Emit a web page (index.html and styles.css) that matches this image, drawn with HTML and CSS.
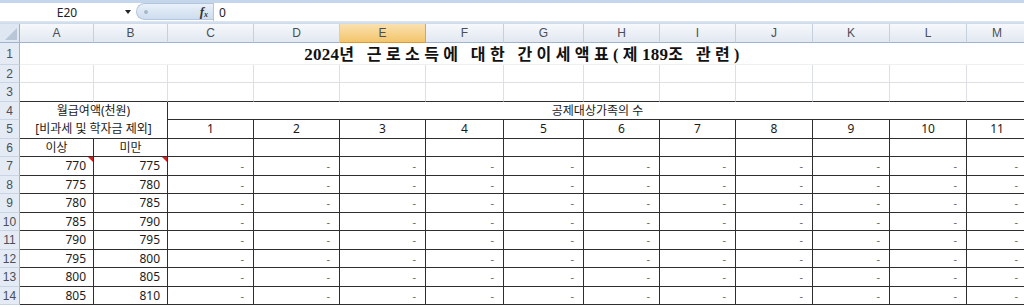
FILE: index.html
```html
<!DOCTYPE html>
<html lang="ko">
<head>
<meta charset="utf-8">
<title>간이세액표</title>
<link rel="stylesheet" href="styles.css">
</head>
<body>
<div class="app">
  <div class="fbar">
    <div class="namebox">E20</div>
    <div class="nb-arrow"></div>
    <div class="pill">
      <span class="pill-dot"></span>
      <span class="fx">f<sub>x</sub></span>
    </div>
    <div class="finput">0</div>
  </div>
  <div class="band"></div>
  <table class="grid">
    <colgroup>
      <col class="w-rh"><col class="w-a"><col class="w-a"><col class="w-c"><col class="w-c"><col class="w-c"><col class="w-f"><col class="w-g"><col class="w-h"><col class="w-h"><col class="w-j"><col class="w-j"><col class="w-j"><col class="w-m">
    </colgroup>
    <thead>
      <tr class="r-hdr">
        <th class="corner"><span class="tri"></span></th>
        <th>A</th><th>B</th><th>C</th><th>D</th><th class="sel">E</th><th>F</th><th>G</th><th>H</th><th>I</th><th>J</th><th>K</th><th>L</th><th>M</th>
      </tr>
    </thead>
    <tbody>
      <tr class="r1"><th>1</th><td colspan="13" class="title"><span class="dg">2024</span>년 근로소득에 대한 간이세액표(제<span class="dg">189</span>조 관련)</td></tr>
      <tr class="h18"><th>2</th><td></td><td></td><td></td><td></td><td></td><td></td><td></td><td></td><td></td><td></td><td></td><td></td><td></td></tr>
      <tr class="h19 pre"><th>3</th><td></td><td></td><td></td><td></td><td></td><td></td><td></td><td></td><td></td><td></td><td></td><td></td><td></td></tr>
      <tr class="h18 box"><th>4</th><td colspan="2" rowspan="2" class="lbl">월급여액(천원)<br>[비과세 및 학자금 제외]</td><td colspan="11" class="ctr">공제대상가족의 수</td></tr>
      <tr class="h19 box"><th>5</th><td class="ctr">1</td><td class="ctr">2</td><td class="ctr">3</td><td class="ctr">4</td><td class="ctr">5</td><td class="ctr">6</td><td class="ctr">7</td><td class="ctr">8</td><td class="ctr">9</td><td class="ctr">10</td><td class="ctr">11</td></tr>
      <tr class="h18 box"><th>6</th><td class="ctr">이상</td><td class="ctr">미만</td><td></td><td></td><td></td><td></td><td></td><td></td><td></td><td></td><td></td><td></td><td></td></tr>
      <tr class="h19 box"><th>7</th><td class="num cm">770<span class="note"></span></td><td class="num cm">775<span class="note"></span></td><td class="d">-</td><td class="d">-</td><td class="d">-</td><td class="d">-</td><td class="d">-</td><td class="d">-</td><td class="d">-</td><td class="d">-</td><td class="d">-</td><td class="d">-</td><td class="d">-</td></tr>
      <tr class="h18 box"><th>8</th><td class="num">775</td><td class="num">780</td><td class="d">-</td><td class="d">-</td><td class="d">-</td><td class="d">-</td><td class="d">-</td><td class="d">-</td><td class="d">-</td><td class="d">-</td><td class="d">-</td><td class="d">-</td><td class="d">-</td></tr>
      <tr class="h19 box"><th>9</th><td class="num">780</td><td class="num">785</td><td class="d">-</td><td class="d">-</td><td class="d">-</td><td class="d">-</td><td class="d">-</td><td class="d">-</td><td class="d">-</td><td class="d">-</td><td class="d">-</td><td class="d">-</td><td class="d">-</td></tr>
      <tr class="h18 box"><th>10</th><td class="num">785</td><td class="num">790</td><td class="d">-</td><td class="d">-</td><td class="d">-</td><td class="d">-</td><td class="d">-</td><td class="d">-</td><td class="d">-</td><td class="d">-</td><td class="d">-</td><td class="d">-</td><td class="d">-</td></tr>
      <tr class="h19 box"><th>11</th><td class="num">790</td><td class="num">795</td><td class="d">-</td><td class="d">-</td><td class="d">-</td><td class="d">-</td><td class="d">-</td><td class="d">-</td><td class="d">-</td><td class="d">-</td><td class="d">-</td><td class="d">-</td><td class="d">-</td></tr>
      <tr class="h18 box"><th>12</th><td class="num">795</td><td class="num">800</td><td class="d">-</td><td class="d">-</td><td class="d">-</td><td class="d">-</td><td class="d">-</td><td class="d">-</td><td class="d">-</td><td class="d">-</td><td class="d">-</td><td class="d">-</td><td class="d">-</td></tr>
      <tr class="h19 box"><th>13</th><td class="num">800</td><td class="num">805</td><td class="d">-</td><td class="d">-</td><td class="d">-</td><td class="d">-</td><td class="d">-</td><td class="d">-</td><td class="d">-</td><td class="d">-</td><td class="d">-</td><td class="d">-</td><td class="d">-</td></tr>
      <tr class="h18 box"><th>14</th><td class="num">805</td><td class="num">810</td><td class="d">-</td><td class="d">-</td><td class="d">-</td><td class="d">-</td><td class="d">-</td><td class="d">-</td><td class="d">-</td><td class="d">-</td><td class="d">-</td><td class="d">-</td><td class="d">-</td></tr>
    </tbody>
  </table>
</div>
</body>
</html>
```

FILE: styles.css
```css
* { box-sizing: border-box; }
html, body { margin: 0; padding: 0; background: #ffffff; }
body { width: 1024px; height: 307px; overflow: hidden; font-family: "Noto Sans", "Noto Sans CJK KR", sans-serif; }
.app { width: 1024px; overflow: hidden; }

.fbar {
  height: 21px;
  display: flex;
  align-items: stretch;
  border-top: 3px solid #c4d6ec;
  background: #ffffff;
  font-size: 12px;
  color: #222;
}
.namebox { width: 122px; display: flex; align-items: center; justify-content: center; padding-left: 12px; }
.nb-arrow { width: 14px; position: relative; }
.nb-arrow::after {
  content: ""; position: absolute; left: 3px; top: 7px;
  border-left: 3px solid transparent; border-right: 3px solid transparent; border-top: 4px solid #222;
}
.pill {
  width: 77px;
  margin: 0 0 1px 0;
  border-radius: 9px 0 0 9px;
  background: linear-gradient(#e9f1fa, #cddcee);
  border: 1px solid #b3c6de;
  border-right: none;
  display: flex; align-items: center; justify-content: space-between;
  padding: 0 5px 0 7px;
}
.pill-dot { width: 4px; height: 4px; border-radius: 50%; background: #a8b7c9; }
.fx { font-family: "Liberation Serif", serif; font-style: italic; font-weight: bold; font-size: 13px; color: #333; line-height: 1; }
.fx sub { font-size: 8px; vertical-align: -1px; }
.finput { flex: 1; border-left: 1px solid #b3c6de; display: flex; align-items: center; padding-left: 5px; font-size: 12px; }

.band { height: 3px; background: linear-gradient(#dfe8f4, #c9d7e9); }

.grid {
  border-collapse: separate;
  border-spacing: 0;
  table-layout: fixed;
  width: 1028px;
  font-size: 12px;
  color: #1a1a1a;
}
.w-rh { width: 20px; }
.w-a { width: 74px; }
.w-c { width: 86px; }
.w-f { width: 78px; }
.w-g { width: 80px; }
.w-h { width: 76px; }
.w-j { width: 77px; }
.w-m { width: 61px; }

.grid td, .grid th { padding: 0; line-height: 14px; overflow: hidden; white-space: nowrap; }
.grid td { border-right: 1px solid #dcdfe4; border-bottom: 1px solid #dcdfe4; }

.r-hdr { height: 19px; }
.r-hdr th {
  font-weight: normal;
  font-family: "Liberation Sans", "Noto Sans", sans-serif;
  font-size: 12px;
  color: #4a4f57;
  background: linear-gradient(#f6f8fb, #e2e8f1);
  border-right: 1px solid #c5d0de;
  border-bottom: 1px solid #9fb3cc;
}
.r-hdr th.sel { background: linear-gradient(#fae1b0, #f3c56b); border-right-color: #e0a445; border-bottom-color: #d99b3a; }
.r-hdr th.corner { position: relative; background: #dfe7f2; border-right: 1px solid #9fb3cc; }
.tri {
  position: absolute; right: 2px; bottom: 2px;
  border-left: 12px solid transparent; border-bottom: 12px solid #b8c6d8;
}

tbody th {
  font-weight: normal;
  font-family: "Liberation Sans", "Noto Sans", sans-serif;
  font-size: 12px;
  color: #4a4f57;
  background: #e4ebf5;
  border-right: 1px solid #9fb3cc;
  border-bottom: 1px solid #c9d5e4;
  text-align: center;
}

.r1 { height: 22px; }
.h18 { height: 18px; }
.h19 { height: 19px; }

.title {
  text-align: center;
  font-family: "Liberation Serif", "Noto Sans CJK KR", serif;
  font-weight: bold;
  font-size: 16px;
  letter-spacing: 4.4px;
  padding-top: 2px !important;
  color: #111;
  border-right: none !important;
  border-bottom-color: #eef0f2 !important;
}
.title .dg { font-size: 17px; letter-spacing: 0.3px; }

.pre td { border-bottom: 1px solid #2e2e2e; }
.box td { border-right: 1px solid #2e2e2e; border-bottom: 1px solid #2e2e2e; }
.box td.lbl { text-align: center; line-height: 18px; font-size: 12px; }
.ctr { text-align: center; }
.num { text-align: right; padding-right: 7px !important; }
.cm { position: relative; }
.note {
  position: absolute; right: 0; top: 0;
  border-left: 5px solid transparent; border-top: 5px solid #d81e1e;
}
.d { text-align: right; padding-right: 9px !important; color: #666; font-size: 11px; }
```
